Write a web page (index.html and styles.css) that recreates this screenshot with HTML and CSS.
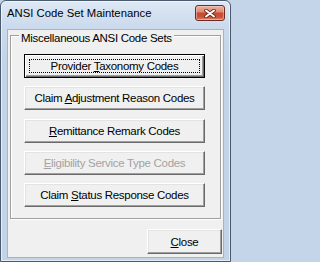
FILE: index.html
```html
<!DOCTYPE html>
<html>
<head>
<meta charset="utf-8">
<title>ANSI Code Set Maintenance</title>
<link rel="stylesheet" href="styles.css">
</head>
<body>
<div class="window">
  <div class="titlebar">
    <span class="title">ANSI Code Set Maintenance</span>
    <div class="close-x">
      <svg width="12" height="9" viewBox="0 0 12 9">
        <path d="M2 1.5 L10 7.5 M10 1.5 L2 7.5" stroke="#6a2416" stroke-width="3.6" stroke-linecap="round" fill="none"/>
        <path d="M2 1.5 L10 7.5 M10 1.5 L2 7.5" stroke="#ffffff" stroke-width="2" stroke-linecap="round" fill="none"/>
      </svg>
    </div>
  </div>
  <div class="client">
    <fieldset class="group">
      <legend>Miscellaneous ANSI Code Sets</legend>
      <button class="btn default">Provider <u>T</u>axonomy Codes</button>
      <button class="btn">Claim <u>A</u>djustment Reason Codes</button>
      <button class="btn"><u>R</u>emittance Remark Codes</button>
      <button class="btn disabled" disabled><u>E</u>ligibility Service Type Codes</button>
      <button class="btn">Claim <u>S</u>tatus Response Codes</button>
    </fieldset>
    <button class="btn close"><u>C</u>lose</button>
  </div>
</div>
</body>
</html>
```
FILE: styles.css
```css
html, body {
  margin: 0;
  padding: 0;
  background: #c4d5e9;
  overflow: hidden;
}

.window {
  box-sizing: border-box;
  width: 231px;
  height: 262px;
  border: 1px solid #4c5a6d;
  border-radius: 6px 6px 0 0;
  background: linear-gradient(#dde8f5 0px, #cbdaec 26px, #c3d4e8 60px, #c3d4e8 100%);
  box-shadow: inset 0 0 0 1px rgba(255, 255, 255, 0.55);
  padding: 0 6px 3px 6px;
  display: flex;
  flex-direction: column;
}

.titlebar {
  height: 28px;
  display: flex;
  align-items: flex-start;
  justify-content: space-between;
  padding-top: 4px;
  box-sizing: border-box;
}

.title {
  font-family: "Liberation Sans", Arial, sans-serif;
  font-size: 11.3px;
  line-height: 14px;
  color: #000;
  margin-top: 1px;
}

.close-x {
  box-sizing: border-box;
  width: 30px;
  height: 16px;
  margin-right: -1px;
  border: 1px solid #6e2b1f;
  border-radius: 3px;
  background: linear-gradient(#ebb2a2 0%, #de8c77 40%, #c84a30 52%, #c8553a 80%, #dd8c70 100%);
  box-shadow: inset 0 0 0 1px rgba(255, 220, 210, 0.45);
  display: flex;
  align-items: center;
  justify-content: center;
}

.close-x svg {
  display: block;
}

.client {
  flex: 1;
  box-sizing: border-box;
  border: 1px solid #a3b4ca;
  background: #f0f0f0;
  display: flex;
  flex-direction: column;
  align-items: stretch;
}

.group {
  margin: 0 2px;
  padding: 13px 0 11px 8px;
  border: 1px solid #a0a0a0;
  box-shadow: inset 1px 1px 0 #ffffff, 1px 1px 0 #ffffff;
  display: flex;
  flex-direction: column;
  align-items: flex-start;
  gap: 8.25px;
  min-width: 0;
}

.group legend {
  font-family: "Liberation Sans", Arial, sans-serif;
  font-size: 11.5px;
  letter-spacing: -0.3px;
  line-height: 5px;
  padding: 6px 2px 0;
  background: #f0f0f0;
  color: #000;
}

.btn {
  box-sizing: border-box;
  width: 181px;
  height: 24px;
  margin: 0 0 0 5px;
  padding: 0;
  font-family: "Liberation Sans", Arial, sans-serif;
  font-size: 11.5px;
  letter-spacing: -0.3px;
  line-height: 14px;
  color: #000;
  background: #f0f0f0;
  border: 1px solid;
  border-color: #ffffff #696969 #696969 #ffffff;
  box-shadow: inset -1px -1px 0 #a0a0a0, inset 1px 1px 0 #e3e3e3;
  border-radius: 0;
  text-align: center;
  cursor: default;
}

.btn u {
  text-decoration-thickness: 1px;
  text-underline-offset: 1px;
}

.btn.default {
  border: 1px solid #000000;
  box-shadow: inset 1px 1px 0 #ffffff, inset -1px -1px 0 #696969, inset -2px -2px 0 #a0a0a0;
  outline: 1px dotted #000000;
  outline-offset: -6px;
}

.btn.disabled {
  color: #a3a3a3;
}

.btn.close {
  align-self: flex-end;
  width: 75px;
  height: 25px;
  margin: 10px 1px 0 0;
}
```
